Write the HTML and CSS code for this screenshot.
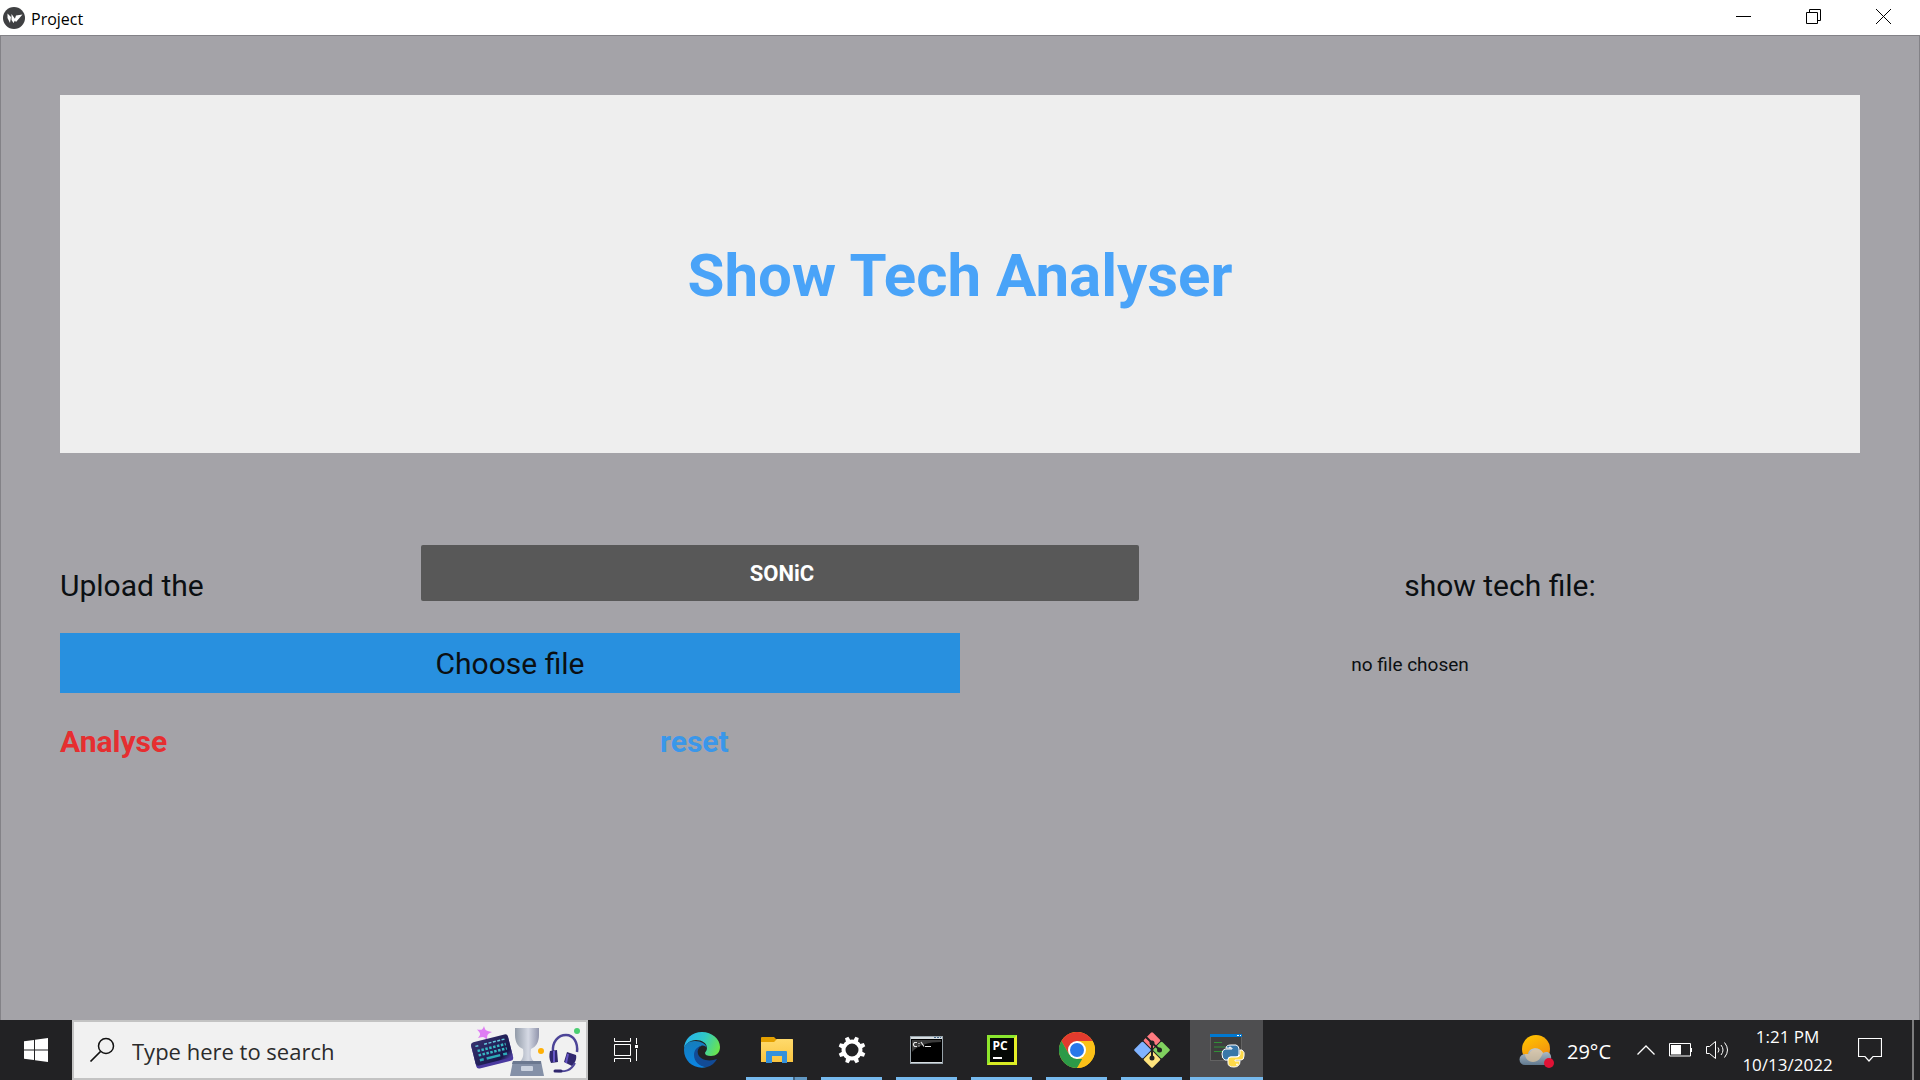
FILE: index.html
```html
<!DOCTYPE html>
<html lang="en">
<head>
<meta charset="utf-8">
<title>Project</title>
<link rel="stylesheet" href="styles.css">
</head>
<body>
<header class="titlebar">
  <svg class="app-logo" width="22" height="22" viewBox="0 0 22 22" aria-hidden="true">
    <circle cx="11" cy="11" r="11" fill="#3f4042"/>
    <path d="M4.500 6.500l3.500 3.500-1 6-2.500-5zM8.500 7l4 5.500-2 3.500-2-3zM13 8.500l6.500-1-6.500 7.500-1.500-2z" fill="#fff"/>
  </svg>
  <span class="app-name">Project</span>
  <div class="window-controls">
    <button class="window-button" aria-label="Minimise"><svg width="15" height="15" viewBox="0 0 15 15"><path d="M0 7.500h15" stroke="#000" fill="none"/></svg></button>
    <button class="window-button" aria-label="Restore"><svg width="15" height="15" viewBox="0 0 15 15"><path d="M.5 3.500h11v11h-11zM3.500 3.500v-3h11v11h-3" stroke="#000" fill="none"/></svg></button>
    <button class="window-button" aria-label="Close"><svg width="15" height="15" viewBox="0 0 15 15"><path d="M0 0l15 15M15 0L0 15" stroke="#000" fill="none"/></svg></button>
  </div>
</header>

<main class="window">
  <section class="banner"><h1 class="banner-title">Show Tech Analyser</h1></section>
  <form class="upload-form">
    <div class="row row-type">
      <label class="label" for="type">Upload the</label>
      <select class="type-select" id="type"><option>SONiC</option></select>
      <span class="label label-center">show tech file:</span>
    </div>
    <div class="row row-file">
      <button class="choose-button" type="button">Choose file</button>
      <output class="file-name">no file chosen</output>
    </div>
    <div class="row row-actions">
      <button class="action analyse" type="button">Analyse</button>
      <button class="action reset" type="reset">reset</button>
    </div>
  </form>
</main>

<footer class="taskbar">
  <button class="start" aria-label="Start">
    <svg width="24" height="24" viewBox="0 0 24 24"><path d="M0 3.300L10 2v9.500H0zM11 1.800L24 0v11.500H11zM0 12.500h10V22L0 20.700zM11 12.500h13V24l-13-1.800z" fill="#fff"/></svg>
  </button>
  <div class="search">
    <svg width="26" height="26" viewBox="0 0 26 26" aria-hidden="true"><circle cx="17" cy="9" r="7.500" fill="none" stroke="#111" stroke-width="1.500"/><path d="M11.500 14.500L1.500 24.500" stroke="#111" stroke-width="1.700"/></svg>
    <input class="search-input" type="text" placeholder="Type here to search" aria-label="Type here to search">
    <svg class="search-art" width="110" height="54" viewBox="0 0 110 54" aria-hidden="true">
      <defs>
        <linearGradient id="cup" x1="0" x2="1"><stop offset="0" stop-color="#929ba8"/><stop offset=".55" stop-color="#d5d9e4"/><stop offset="1" stop-color="#9195ac"/></linearGradient>
        <linearGradient id="keys" x1="0" y1="0" x2="1" y2="1"><stop offset="0" stop-color="#36306e"/><stop offset=".8" stop-color="#17184c"/><stop offset="1" stop-color="#5a49af"/></linearGradient>
      </defs>
      <path d="M13 3q1 4 2.500 4.500T21 9q-4 1.500-4.500 3T16 17q-2.500-3-4-3t-5 1q2.500-3 2-4.500T6 6.500q4 .5 5 0T13 3z" fill="#df7df4"/>
      <g transform="rotate(-14 21 28)">
        <rect x="2" y="16" width="38" height="26" rx="3" fill="#4b3aa0"/>
        <rect x="2" y="15" width="38" height="24" rx="3" fill="url(#keys)"/>
        <path d="M6 19.500h3M15 19.500h22" stroke="#69c8df" stroke-width="1.500" stroke-dasharray="3 1.500"/>
        <path d="M7 24.500h29M7 29h29" stroke="#38b7c3" stroke-width="2.500" stroke-dasharray="2.500 1.500"/>
        <path d="M7 34h4M14 34h14M31 34h4" stroke="#2daab8" stroke-width="2.500"/>
      </g>
      <path d="M44 5h24v7c0 7-3 12-8 14-1 6 0 11 4 13v3H48v-3c4-2 5-7 4-13-5-2-8-7-8-14z" fill="url(#cup)"/>
      <path d="M42 38h28l3 15H39z" fill="#8490a7"/>
      <path d="M42 38h28v3H41z" fill="#6b7890"/>
      <rect x="50" y="43" width="12" height="5" rx="1" fill="#cbd2df"/>
      <circle cx="70" cy="28" r="3" fill="#ffb006"/>
      <circle cx="106" cy="8" r="3" fill="#4bce72"/>
      <path d="M82 29c-1-10 5-17 13-17s12 8 11 17" fill="none" stroke="#4d4598" stroke-width="2.500"/>
      <path d="M79 28l7-1 1 12-7 1c-2-4-2-8-1-12zM96 29l9 3c1 4-1 8-4 11l-8-4z" fill="#30276e"/>
      <path d="M83 28v11M97 31l-2 9" stroke="#6756c6" stroke-width="2"/>
      <path d="M104 40c-4 8-10 9-19 8" fill="none" stroke="#4d4598" stroke-width="2"/>
      <path d="M84 48h6" stroke="#30276e" stroke-width="3" stroke-linecap="round"/>
    </svg>
  </div>
  <nav class="apps" aria-label="Taskbar">
    <button class="app" aria-label="Task view">
      <svg width="25" height="24" viewBox="0 0 25 24" fill="none" stroke="#fff"><path d="M.5 0v3.500h16V0M.5 6.500h16v11H.5zM.5 24v-3.500h16V24M22.500 0v6M22.500 11v12"/><path d="M21 7h3v3h-3z" fill="#fff" stroke="none"/></svg>
    </button>
    <button class="app" aria-label="Edge">
      <svg width="36" height="36" viewBox="0 0 36 36">
        <defs>
          <linearGradient id="edge-top" x1="0" y1=".3" x2="1" y2=".6"><stop offset="0" stop-color="#27b2ef"/><stop offset=".5" stop-color="#30c9c7"/><stop offset="1" stop-color="#6ae44d"/></linearGradient>
          <linearGradient id="edge-left" x1=".3" y1="0" x2=".4" y2="1"><stop offset="0" stop-color="#157dbb"/><stop offset="1" stop-color="#0b85e3"/></linearGradient>
        </defs>
        <path d="M0 17C0 7 8 0 18 0s18 7 18 15c0 6-4 9-9 9-4 0-6-1-6-3 0-1 2-2 2-5 0-5-5-8-11-8C6 8 1 12 0 17z" fill="url(#edge-top)"/>
        <path d="M0 18C0 12 5 9 11 9c6 0 11 3 12 7-1-2-4-3-6-2-5 2-6 6-6 9 0 6 5 11 12 12C11 38 0 30 0 18z" fill="url(#edge-left)"/>
        <path d="M17 14c-3 2-4 5-3 8 2 6 11 8 19 5-2 4-6 7-10 8-8 0-13-6-13-12 0-5 3-8 7-9z" fill="#124b96"/>
      </svg>
    </button>
    <button class="app running stacked" aria-label="File Explorer">
      <svg width="32" height="27" viewBox="0 0 32 27">
        <defs><linearGradient id="folder" x1="0" y1="0" x2="0" y2="1"><stop offset="0" stop-color="#ffda6c"/><stop offset="1" stop-color="#fac540"/></linearGradient></defs>
        <path d="M0 1q0-1 1-1h12l2 2h16q1 0 1 1v8H0z" fill="#e4a000"/>
        <path d="M0 5h13l3-3h15q1 0 1 1v22H0z" fill="url(#folder)"/>
        <path d="M5 26V15q0-1 1-1h19q1 0 1 1v11h-5v-7H11v7z" fill="#3491dc"/>
      </svg>
    </button>
    <button class="app running" aria-label="Settings">
      <svg width="28" height="28" viewBox="0 0 28 28">
        <circle cx="14" cy="14" r="8.500" fill="none" stroke="#fff" stroke-width="4"/>
        <g fill="#fff">
          <path id="tooth" d="M11.500 5l.7-4.600h3.600l.7 4.600z" transform="rotate(22 14 14)"/>
          <use href="#tooth" transform="rotate(45 14 14)"/><use href="#tooth" transform="rotate(90 14 14)"/><use href="#tooth" transform="rotate(135 14 14)"/><use href="#tooth" transform="rotate(180 14 14)"/><use href="#tooth" transform="rotate(225 14 14)"/><use href="#tooth" transform="rotate(270 14 14)"/><use href="#tooth" transform="rotate(315 14 14)"/>
        </g>
      </svg>
    </button>
    <button class="app running" aria-label="Command Prompt">
      <svg width="33" height="28" viewBox="0 0 33 28">
        <rect x=".5" y=".5" width="32" height="27" fill="#000" stroke="#98a3aa"/>
        <path d="M1 1h31v2H1z" fill="#d6dde1"/><path d="M24 1.500h7" stroke="#47698c" stroke-dasharray="2 1"/>
        <path d="M2 4h29v2c-12 0-23 3-29 10z" fill="#3b3b3b"/>
        <path d="M7 6.500H4.500L3.500 8v1l1 1.500H7M9 7v1M9 9.500v1M11 6l3 4.500M15 10.500h6" stroke="#e2e2e2" stroke-width="1.200" fill="none"/>
        <path d="M1 26.500h31" stroke="#d6dde1"/>
      </svg>
    </button>
    <button class="app running" aria-label="PyCharm">
      <span class="pycharm">PC</span>
    </button>
    <button class="app running" aria-label="Chrome">
      <svg width="36" height="36" viewBox="0 0 36 36">
        <circle cx="18" cy="18" r="18" fill="#fcc118"/>
        <path d="M2.400 9A18 18 0 0 1 33.600 9H18l-7.800 13.500z" fill="#e33b2e"/>
        <path d="M2.400 9l7.800 13.500L18 27h7.800L18 36A18 18 0 0 1 2.400 9z" fill="#2c9a48"/>
        <path d="M25.800 22.500L18 36A18 18 0 0 0 33.600 9H18z" fill="#fcc118"/>
        <circle cx="18" cy="18" r="9" fill="#fff"/><circle cx="18" cy="18" r="7" fill="#2878ea"/>
      </svg>
    </button>
    <button class="app running" aria-label="Git">
      <svg width="36" height="36" viewBox="0 0 36 36">
        <g transform="rotate(45 18 18)">
          <rect x="5" y="5" width="12.500" height="12.500" rx="1.500" fill="#ff7b80"/>
          <rect x="18.500" y="5" width="12.500" height="12.500" rx="1.500" fill="#80d15f"/>
          <rect x="5" y="18.500" width="12.500" height="12.500" rx="1.500" fill="#80b3ff"/>
          <rect x="18.500" y="18.500" width="12.500" height="12.500" rx="1.500" fill="#ffe47d"/>
        </g>
        <path d="M12 5l6 6v15M18 11l8 7" stroke="#222" stroke-width="2" fill="none"/>
        <circle cx="18" cy="11" r="2.500" fill="#222"/><circle cx="18" cy="26" r="2.500" fill="#222"/><circle cx="25.500" cy="18" r="2.500" fill="#222"/>
      </svg>
    </button>
    <button class="app running active" aria-label="Python">
      <svg width="36" height="36" viewBox="0 0 36 36">
        <rect x="1.500" y="2.500" width="31" height="26" fill="#3e3e3e" stroke="#626262"/>
        <path d="M1 2h32v3H1z" fill="#0078d0"/><path d="M28 3.500h4" stroke="#fff" stroke-dasharray="2 1"/>
        <path d="M5 10.500h8M5 15h11M5 19.500h9" stroke="#319036" stroke-width="1.200"/>
        <g stroke="#fff" stroke-width="1">
          <path d="M22 13h5q3 1 3 4v5q0 3-3 3h-6q-2 0-2 3h-3q-3-1-3-6 0-4 3-5h7v-1h-6q0-3 5-3z" fill="#3977a8"/>
          <path d="M31 18h2q3 2 2 6 0 4-3 4h-6v1h5q0 6-6 6-6 0-6-4v-3q0-3 3-3h6q3 0 3-3z" fill="#ffda48"/>
        </g>
        <circle cx="21" cy="15.500" r=".9" fill="#fff"/><circle cx="28" cy="32.500" r=".9" fill="#fff"/>
      </svg>
    </button>
  </nav>
  <div class="tray">
    <div class="weather">
      <svg width="36" height="36" viewBox="0 0 36 36" aria-hidden="true">
        <defs>
          <linearGradient id="sun" x1=".2" y1="0" x2=".7" y2="1"><stop offset="0" stop-color="#ffc400"/><stop offset="1" stop-color="#f18712"/></linearGradient>
          <linearGradient id="cloud" x1="0" y1="0" x2="0" y2="1"><stop offset="0" stop-color="#c0cbd6"/><stop offset="1" stop-color="#60798f"/></linearGradient>
        </defs>
        <circle cx="17" cy="17" r="14" fill="url(#sun)"/>
        <path d="M6 33a5.500 5.500 0 0 1 0-11h3c1-7 12-8 15-1 5-3 9 1 8 6 0 4-2 6-5 6z" fill="url(#cloud)"/>
        <path d="M6 22h4c4-8 13-4 14-1-2 5-5 9-10 9-5 0-8-4-8-8z" fill="#e3c8a0" opacity=".7"/>
        <circle cx="30" cy="31" r="5" fill="#e01235"/>
      </svg>
      <span>29°C</span>
    </div>
    <div class="status">
      <svg width="18" height="10" viewBox="0 0 18 10" aria-label="Hidden icons"><path d="M.5 9.500L9 1l8.500 8.500" fill="none" stroke="#fff" stroke-width="1.300"/></svg>
      <svg width="23" height="14" viewBox="0 0 23 14" aria-label="Battery"><path d="M.5 .5h21v12.500H.5zM22.500 5v4" fill="none" stroke="#fff"/><path d="M2 2h10v9.500H2z" fill="#fff"/></svg>
      <svg width="23" height="20" viewBox="0 0 23 20" aria-label="Volume"><path d="M.5 6.500h3l6-5v17l-6-5h-3zM12 7.500q2 2.500 0 5M15 5q4 5 0 10M18.500 2.500q6 7.500 0 15" fill="none" stroke="#fff"/></svg>
    </div>
    <div class="clock"><time>1:21 PM</time><time>10/13/2022</time></div>
    <button class="notifications" aria-label="Notifications"><svg width="24" height="24" viewBox="0 0 24 24"><path d="M.5 .5h23v18H15l-4 4.500-4-4.500H.5z" fill="none" stroke="#fff" stroke-width="1.200"/></svg></button>
    <div class="show-desktop"></div>
  </div>
</footer>
</body>
</html>
```

FILE: styles.css
```css
* {
  box-sizing: border-box;
}

body {
  margin: 0;
  min-height: 100vh;
  display: flex;
  flex-direction: column;
  background: #a4a3a8;
  font-family: "Open Sans", "Noto Sans", sans-serif;
}

button,
select,
input {
  margin: 0;
  padding: 0;
  border: 0;
  border-radius: 0;
  background: none;
  font: inherit;
  color: inherit;
}

svg {
  display: block;
  flex: none;
}

/* Title bar */
.titlebar {
  display: flex;
  align-items: center;
  gap: 6px;
  height: 35px;
  padding: 0 2px 0 3px;
  background: #fff;
}

.app-name {
  padding-top: 2px;
  font-size: 16px;
  line-height: 24px;
  color: #000;
}

.window-controls {
  display: flex;
  margin-left: auto;
  height: 100%;
}

.window-button {
  display: grid;
  place-items: center;
  width: 70px;
  padding-bottom: 2px;
}

/* Application window */
.window {
  flex: 1;
  padding: 59px;
  border: 1px solid #838287;
  border-bottom: 0;
  font-family: Roboto, sans-serif;
  color: #0b0f12;
}

.banner {
  padding: 146px 0 142px;
  background: #eee;
}

.banner-title {
  margin: 0;
  font-size: 60px;
  line-height: 70px;
  font-weight: 700;
  text-align: center;
  color: #49a3f8;
}

.upload-form {
  display: flex;
  flex-direction: column;
  margin-top: 92px;
}

.row {
  display: grid;
  align-items: start;
}

.row-type {
  grid-template-columns: 1fr 2fr 2fr;
  min-height: 88px;
}

.row-file {
  grid-template-columns: 1fr 1fr;
  align-items: center;
}

.row-actions {
  grid-template-columns: 1fr 1fr 1fr;
  margin-top: 31px;
}

.label {
  padding-top: 23px;
  font-size: 30px;
  line-height: 36px;
}

.label-center {
  text-align: center;
}

.type-select {
  appearance: none;
  height: 56px;
  margin: 0 1px;
  padding-left: 4px;
  border-radius: 2px;
  background: #585858;
  color: #fff;
  font-size: 22px;
  font-weight: 700;
  text-align: center;
  text-align-last: center;
}

.choose-button {
  height: 60px;
  padding-top: 2px;
  background: #2890df;
  font-size: 30px;
  line-height: 36px;
}

.file-name {
  padding-top: 4px;
  font-size: 19px;
  line-height: 24px;
  text-align: center;
}

.action {
  font-size: 30px;
  line-height: 36px;
  font-weight: 700;
  text-align: left;
}

.analyse {
  color: #e62e30;
}

.reset {
  color: #3a97ea;
}

/* Taskbar */
.taskbar {
  display: flex;
  height: 60px;
  background: #222224;
  color: #fff;
}

.start {
  display: grid;
  place-items: center;
  width: 72px;
}

.search {
  display: flex;
  align-items: center;
  gap: 17px;
  width: 516px;
  padding-left: 15px;
  border: 2px solid #c3c3c3;
  background: #f1f1f1;
}

.search-input {
  flex: 1;
  min-width: 0;
  padding-top: 2px;
  font-size: 22px;
  color: #2b2b2b;
}

.search-input::placeholder {
  color: #2b2b2b;
  opacity: 1;
}

.search-art {
  margin-right: 5px;
}

.apps {
  display: flex;
  gap: 2px;
  padding-left: 2px;
}

.app {
  position: relative;
  display: grid;
  place-items: center;
  width: 73px;
}

.running::after {
  content: "";
  position: absolute;
  bottom: 0;
  left: 6px;
  right: 6px;
  height: 3px;
  background: #76b9ed;
}

.stacked::after {
  background: linear-gradient(90deg, #76b9ed 47px, #43637f 47px, #43637f 49px, #6197c2 49px);
}

.active {
  background: #4e4e50;
}

.active::after {
  left: 0;
  right: 0;
}

.pycharm {
  width: 30px;
  height: 30px;
  padding-left: 3px;
  border: 3px solid;
  border-color: #8be72f #e6ef27 #d9ec24 #8fe62c;
  background: linear-gradient(#fff, #fff) 3px 19px / 9px 2px no-repeat, #050805;
  font-family: "Open Sans", sans-serif;
  font-size: 12px;
  line-height: 16px;
  font-weight: 700;
  text-align: left;
}

.tray {
  display: flex;
  align-items: center;
  margin-left: auto;
}

.weather {
  display: flex;
  align-items: center;
  gap: 12px;
  margin-right: 26px;
  font-size: 20px;
  line-height: 28px;
}

.weather span {
  padding-top: 4px;
}

.status {
  display: flex;
  align-items: center;
  gap: 14px;
}

.clock {
  display: flex;
  flex-direction: column;
  width: 117px;
  padding-top: 1px;
  font-size: 17px;
  line-height: 28px;
  text-align: center;
}

.notifications {
  display: grid;
  place-items: center;
  width: 48px;
  margin-right: 18px;
}

.show-desktop {
  align-self: stretch;
  width: 8px;
  border-left: 2px solid #7d7d7e;
}
```
